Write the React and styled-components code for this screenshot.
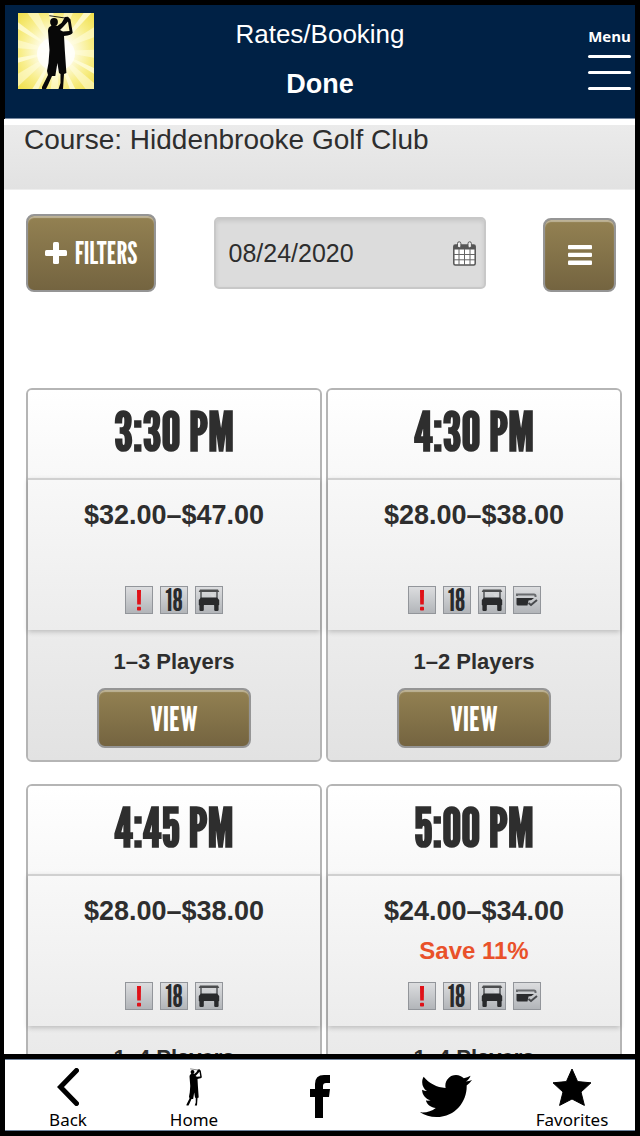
import { useState } from "react";
import styled, { createGlobalStyle } from "styled-components";
import { FaTwitter } from "react-icons/fa";

const narrow = `"League Gothic", "Roboto Condensed", Roboto, sans-serif`;

const GlobalStyle = createGlobalStyle`
  * {
    box-sizing: border-box;
  }
  body {
    margin: 0;
    background: #000;
    color: #2e2e2e;
    font-family: "Liberation Sans", Arial, sans-serif;
  }
`;

const Shell = styled.div`
  display: flex;
  flex-direction: column;
  height: 100vh;
  padding: 5px 5px 5px 4px;
`;

const Header = styled.header`
  display: grid;
  grid-template-columns: 1fr auto 1fr;
  align-items: start;
  flex: none;
  height: 114px;
  padding: 8px 4px 0;
  margin-left: 1px;
  background: #002145;
  border-bottom: 1px solid #7688a0;
  color: #fff;
`;

const Logo = styled.svg`
  display: block;
  width: 76px;
  height: 76px;
  margin-left: 9px;
`;

const Titles = styled.div`
  display: flex;
  flex-direction: column;
  align-items: center;
  gap: 10px;
  padding-top: 1px;
`;

const Title = styled.h1`
  margin: 0;
  font-size: 26px;
  font-weight: 400;
  line-height: 40px;
`;

const DoneButton = styled.button`
  padding: 0;
  border: 0;
  background: none;
  color: #fff;
  font: bold 27px/40px "Liberation Sans", Arial, sans-serif;
`;

const MenuButton = styled.button`
  display: flex;
  flex-direction: column;
  align-items: stretch;
  justify-self: end;
  gap: 13px;
  width: 43px;
  padding: 13px 0 0;
  border: 0;
  background: none;
  color: #fff;
  font: bold 15px/20px "Open Sans", sans-serif;
`;

const MenuText = styled.span`
  margin-bottom: -4px;
`;

const MenuLine = styled.span`
  height: 3px;
  border-radius: 2px;
  background: #fff;
`;

const Content = styled.main`
  flex: 1;
  min-height: 0;
  overflow: hidden;
  background: #fff;
`;

const CourseBar = styled.h2`
  height: 65px;
  margin: 6px 0 0;
  padding: 0 20px;
  background: linear-gradient(#ebebeb, #e2e2e2);
  border-bottom: 1px solid #eee;
  font-size: 28px;
  font-weight: 400;
  line-height: 30px;
`;

const Toolbar = styled.div`
  display: flex;
  align-items: center;
  justify-content: space-between;
  padding: 24px 19px 96px 22px;
`;

const GoldButton = styled.button`
  display: flex;
  align-items: center;
  justify-content: center;
  gap: 8px;
  align-self: ${(p) => p.$align || "auto"};
  width: ${(p) => p.$width}px;
  height: ${(p) => p.$height}px;
  padding: 0;
  border: 2px solid #959595;
  border-radius: 8px;
  background: linear-gradient(#938152, #746440);
  box-shadow: inset 0 2px 1px rgba(255, 255, 255, 0.4);
  color: #fff;
  font-family: ${narrow};
  font-size: ${(p) => p.$size || 30}px;
`;

const DateField = styled.label`
  display: flex;
  align-items: center;
  width: 272px;
  height: 72px;
  padding: 0 8px 0 13px;
  border: 2px solid #c8c8c8;
  border-radius: 5px;
  background: #dcdcdc;
  box-shadow: inset 0 2px 4px rgba(0, 0, 0, 0.1);
`;

const DateInput = styled.input`
  flex: 1;
  min-width: 0;
  padding: 0;
  border: 0;
  outline: 0;
  background: none;
  color: #2e2e2e;
  font: 25px "Liberation Sans", Arial, sans-serif;
`;

const Cards = styled.div`
  display: grid;
  grid-template-columns: 1fr 1fr;
  gap: 22px 4px;
  padding: 0 13px 0 22px;
`;

const Card = styled.article`
  border: 2px solid #b5b5b5;
  border-radius: 6px;
  background: #e8e8e8;
  text-align: center;
`;

const Time = styled.h3`
  margin: 0;
  padding-bottom: 4px;
  background: linear-gradient(#fff, #f8f8f8);
  border-radius: 4px 4px 0 0;
  font: bold 54px/84px ${narrow};
`;

const Rate = styled.div`
  position: relative;
  padding: 19px 0 16px;
  border-top: 2px solid #d0d0d0;
  background: linear-gradient(#f8f8f8, #ececec);
  box-shadow: 0 2px 5px rgba(0, 0, 0, 0.2);
`;

const Price = styled.div`
  font-size: 27px;
  font-weight: 700;
  line-height: 32px;
`;

const Save = styled.div`
  min-height: 32px;
  margin: 8px 0 15px;
  color: #e9512a;
  font-size: 24px;
  font-weight: 700;
  line-height: 32px;
`;

const Badges = styled.div`
  display: flex;
  justify-content: center;
  gap: 7px;
`;

const Badge = styled.span`
  display: flex;
  align-items: center;
  justify-content: center;
  width: 28px;
  height: 28px;
  border: 1px solid #92959a;
  background: linear-gradient(#dcdddf, #b2b5b9);
  color: #292a2c;
  font: 30px/26px ${narrow};
`;

const Booking = styled.div`
  display: flex;
  flex-direction: column;
  align-items: center;
  gap: 12px;
  padding: 18px 0 12px;
  border-radius: 0 0 4px 4px;
  background: linear-gradient(#ececec, #e2e2e2);
`;

const Players = styled.div`
  font-size: 22px;
  font-weight: 700;
  line-height: 28px;
`;

const Footer = styled.nav`
  display: grid;
  grid-template-columns: repeat(5, 1fr);
  flex: none;
  height: 72px;
  margin: 5px 0 0 1px;
  background: #fff;
  border: 1px solid #6f829b;
  border-width: 1px 0;
`;

const FooterLink = styled.a`
  display: flex;
  flex-direction: column;
  align-items: center;
  justify-content: center;
  gap: 2px;
  color: #000;
  font: 17px/24px "Noto Sans", sans-serif;
  text-decoration: none;
`;

const FooterIcon = styled.svg`
  display: block;
  height: 38px;
  margin-top: 8px;
`;

const Golfer = () => (
  <g>
    <path d="M31.3 2.7 L47 5" stroke="currentColor" strokeWidth="0.9" />
    <circle cx="36" cy="9" r="3.9" fill="currentColor" />
    <path
      fill="currentColor"
      fillRule="evenodd"
      d="M34 11 L33 13 Q30 14 30 18 L31.5 37 L30.5 50 L29 58 L30 62 L24 74 V76 H28 L30 72 L34 63 H37.3 L39.4 50 L41 60 L42.5 61 V70 L40.5 76 H45 L46 61 L48.4 60 L46.8 37 L46 23 Q54 22 54.7 19.7 L52.5 6.5 L50 3.7 L47 4 L43.7 9.7 L39.3 13 Z M42 17 L45 14 L50 8.5 L51.5 18 L45 18.5 Z"
    />
  </g>
);

const rays = [4, 27, 46, 66, 92, 118, 143, 166, 190, 213, 239, 262, 288, 309, 334];

const LogoArt = () => (
  <Logo viewBox="0 0 76 76" role="img" aria-label="Golfer">
    <defs>
      <radialGradient id="sun">
        <stop offset="0.25" stopColor="#fffef2" />
        <stop offset="0.62" stopColor="#f8ee8b" />
        <stop offset="1" stopColor="#eedc3f" />
      </radialGradient>
    </defs>
    <circle cx="38" cy="38" r="56" fill="url(#sun)" />
    {rays.map((angle, i) => (
      <path
        key={angle}
        d={i % 2 ? "M38 38 L95 35 V42 Z" : "M38 38 L95 32 V44 Z"}
        fill="#fffde0"
        opacity={i % 2 ? 0.75 : 0.55}
        transform={`rotate(${angle} 38 38)`}
      />
    ))}
    <ellipse cx="38" cy="41" rx="19" ry="17" fill="#fff" opacity="0.75" />
    <g color="#080808">
      <Golfer />
    </g>
  </Logo>
);

const PlusIcon = () => (
  <svg width="22" height="22" viewBox="0 0 22 22" fill="#fff">
    <rect x="8" width="6" height="22" rx="1.5" />
    <rect y="8" width="22" height="6" rx="1.5" />
  </svg>
);

const BarsIcon = () => (
  <svg width="24" height="20" viewBox="0 0 24 20" fill="#fff">
    <rect width="24" height="4.3" rx="1" />
    <rect y="7.8" width="24" height="4.3" rx="1" />
    <rect y="15.6" width="24" height="4.3" rx="1" />
  </svg>
);

const CalendarIcon = () => (
  <svg width="23" height="25" viewBox="0 0 23 25">
    <rect x="0.8" y="4" width="21.4" height="20" rx="1.5" fill="#fff" stroke="#555" strokeWidth="1.5" />
    <path d="M1 4 H22 V8.5 H1 Z" fill="#555" />
    <path d="M6 8 V24 M11.5 8 V24 M17 8 V24 M1 13.5 H22 M1 18.8 H22" stroke="#666" strokeWidth="1" />
    <rect x="4.5" y="0.8" width="3.4" height="6" rx="1.7" fill="#eee" stroke="#555" />
    <rect x="15" y="0.8" width="3.4" height="6" rx="1.7" fill="#eee" stroke="#555" />
  </svg>
);

const AlertIcon = () => (
  <svg width="26" height="26" viewBox="0 0 26 26" fill="#df1118">
    <path d="M11 3 H15 L14.8 17.5 H11.2 Z" />
    <rect x="11" y="19.8" width="4" height="3.7" rx="0.8" />
  </svg>
);

const CartIcon = () => (
  <svg width="26" height="26" viewBox="0 0 26 26" fill="#292a2c">
    <path d="M4 2.5 H22 L23.3 5 H2.7 Z" opacity="0.8" />
    <path d="M5 4 V12 M21 4 V12" stroke="#4b4d50" strokeWidth="1.4" />
    <path d="M14 7 H18 L19 10 H16 Z" fill="#d7d8da" />
    <path d="M5 10.5 H21 L23.2 13 V18 H2.8 V13 Z" />
    <rect x="3.4" y="17" width="4.4" height="7" rx="1.2" />
    <rect x="18.2" y="17" width="4.4" height="7" rx="1.2" />
  </svg>
);

const CardIcon = () => (
  <svg width="26" height="26" viewBox="0 0 26 26">
    <path d="M3 9 V7.5 H20 Q21.5 7.5 21.5 9 V10" fill="none" stroke="#696b6e" strokeWidth="2" />
    <path d="M2.5 11 H20 L17.5 13 L14.5 13.5 L13.5 18.5 H4 Q2.5 18.5 2.5 17 Z" fill="#2b2c2e" />
    <path d="M14.5 16 L17 18 L23 13" fill="none" stroke="#484a4d" strokeWidth="2" />
  </svg>
);

const badgeArt = {
  alert: <AlertIcon />,
  holes: "18",
  cart: <CartIcon />,
  card: <CardIcon />,
};

const teeTimes = [
  { time: "3:30 PM", price: "$32.00–$47.00", players: "1–3 Players", badges: ["alert", "holes", "cart"] },
  { time: "4:30 PM", price: "$28.00–$38.00", players: "1–2 Players", badges: ["alert", "holes", "cart", "card"] },
  { time: "4:45 PM", price: "$28.00–$38.00", players: "1–4 Players", badges: ["alert", "holes", "cart"] },
  {
    time: "5:00 PM",
    price: "$24.00–$34.00",
    save: "Save 11%",
    players: "1–4 Players",
    badges: ["alert", "holes", "cart", "card"],
  },
];

export default function App() {
  const [date, setDate] = useState("08/24/2020");

  return (
    <>
      <GlobalStyle />
      <Shell>
        <Header>
          <LogoArt />
          <Titles>
            <Title>Rates/Booking</Title>
            <DoneButton>Done</DoneButton>
          </Titles>
          <MenuButton>
            <MenuText>Menu</MenuText>
            <MenuLine />
            <MenuLine />
            <MenuLine />
          </MenuButton>
        </Header>
        <Content>
          <CourseBar>Course: Hiddenbrooke Golf Club</CourseBar>
          <Toolbar>
            <GoldButton $width={130} $height={78}>
              <PlusIcon />
              FILTERS
            </GoldButton>
            <DateField>
              <DateInput aria-label="Date" value={date} onChange={(e) => setDate(e.target.value)} />
              <CalendarIcon />
            </DateField>
            <GoldButton $width={73} $height={74} $align="flex-end" aria-label="Options">
              <BarsIcon />
            </GoldButton>
          </Toolbar>
          <Cards>
            {teeTimes.map((t) => (
              <Card key={t.time}>
                <Time>{t.time}</Time>
                <Rate>
                  <Price>{t.price}</Price>
                  <Save>{t.save}</Save>
                  <Badges>
                    {t.badges.map((b) => (
                      <Badge key={b}>{badgeArt[b]}</Badge>
                    ))}
                  </Badges>
                </Rate>
                <Booking>
                  <Players>{t.players}</Players>
                  <GoldButton $width={154} $height={60} $size={34}>
                    VIEW
                  </GoldButton>
                </Booking>
              </Card>
            ))}
          </Cards>
        </Content>
        <Footer>
          <FooterLink href="#back">
            <FooterIcon width="22" viewBox="0 0 22 38">
              <path d="M19.5 2.5 L3.5 19 L19.5 35.5" fill="none" stroke="#000" strokeWidth="5" strokeLinecap="round" />
            </FooterIcon>
            Back
          </FooterLink>
          <FooterLink href="#home">
            <FooterIcon width="20" viewBox="20 1 38 76">
              <Golfer />
            </FooterIcon>
            Home
          </FooterLink>
          <FooterLink href="#facebook" aria-label="Facebook">
            <svg width="20" height="43" viewBox="0 0 20 43">
              <path d="M5 43 V22 H0 V14 H5 V9 Q5 0 14 0 H20 V8 H16 Q13 8 13 11 V14 H20 L19 22 H13 V43 Z" />
            </svg>
          </FooterLink>
          <FooterLink href="#twitter" aria-label="Twitter">
            <FaTwitter size={52} />
          </FooterLink>
          <FooterLink href="#favorites">
            <FooterIcon width="40" viewBox="0 0 40 38">
              <path
                d="M20 1 L25.6 13.6 L39 14.8 L29 24 L32.4 37.4 L20 31 L7.6 37.4 L11 24 L1 14.8 L14.4 13.6 Z"
                stroke="#000"
                strokeWidth="1"
                strokeLinejoin="round"
              />
            </FooterIcon>
            Favorites
          </FooterLink>
        </Footer>
      </Shell>
    </>
  );
}
